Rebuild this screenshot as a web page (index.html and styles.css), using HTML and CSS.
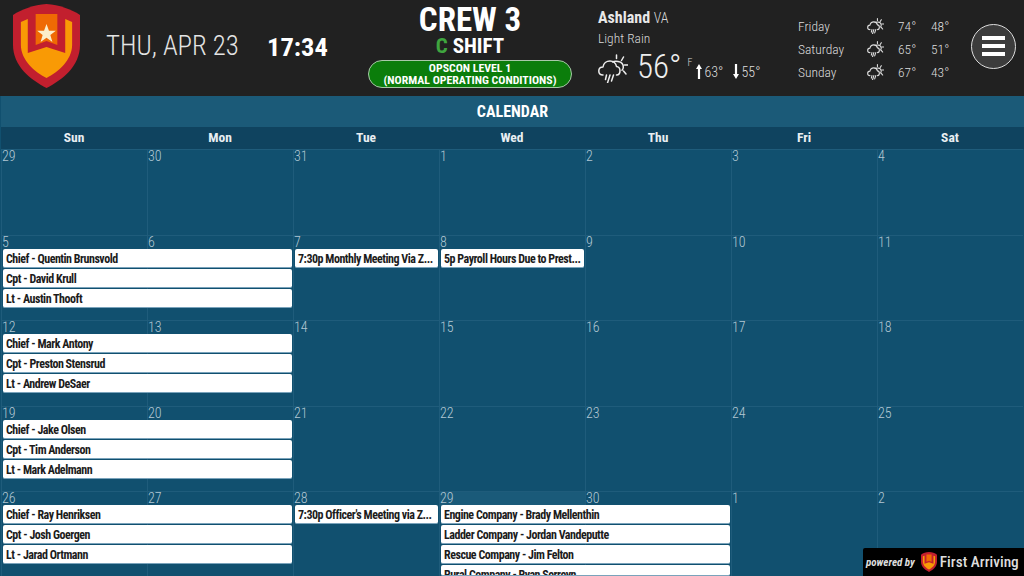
FILE: index.html
```html
<!DOCTYPE html>
<html>
<head>
<meta charset="utf-8">
<title>Station Board</title>
<link rel="stylesheet" href="styles.css">
</head>
<body>
<svg class="defs" width="0" height="0">
  <symbol id="rain" viewBox="0 0 30 29">
    <g fill="none" stroke="currentColor" stroke-linecap="round" stroke-linejoin="round">
      <path d="M5 21C2 21 .8 19 .8 17C.8 14.500 2.500 13 5 13C5.500 9.500 8.500 7 12 7C15.500 7 18 9.500 18.500 12.500C20.500 12.500 22 14.500 22 16.800C22 19.200 20.500 21 18.500 21"/>
      <path d="M14.500 8C15.500 7.500 18 7.200 20 7.500C23.500 8 25.500 10.500 25.300 13.500C25.200 14.500 24.800 15.500 24 16.300"/>
      <path d="M8.500 21L7.500 25.500M12 21L9.500 29M15.500 21L13.500 27"/>
      <path d="M18.500 1V4.500M25.500 3L23.500 6.500M26.500 11H30M25.500 17L28 20"/>
    </g>
  </symbol>
</svg>

<header class="top">
  <svg class="logo" viewBox="0 0 68 84" preserveAspectRatio="none">
    <path d="M34 0C47 1 59 5 68 11V41C68 62 50 76 34 84C18 76 0 62 0 41V11C9 5 21 1 34 0Z" fill="#c21f2e"/>
    <path d="M8 18L15 15V49L34 43L53 49V15L60 18V41C60 56 46 68 34 74C22 68 8 56 8 41Z" fill="#f99a05"/>
    <path d="M23 10H45V41L34 37L23 41Z" fill="#ef6a04"/>
    <path d="M34 20L36.500 26.800L43.500 26.800L37.900 31L40 38L34 33.800L28 38L30.100 31L24.500 26.800L31.500 26.800Z" fill="#fbeecb"/>
  </svg>
  <div class="date">THU, APR 23</div>
  <div class="clock">17:34</div>
  <div class="crew">
    <div class="crew-name">CREW 3</div>
    <div class="crew-shift"><span class="shift-letter">C</span> SHIFT</div>
    <div class="opscon">OPSCON LEVEL 1<br>(NORMAL OPERATING CONDITIONS)</div>
  </div>
  <div class="weather">
    <div class="city"><b>Ashland</b> <span class="state">VA</span></div>
    <div class="cond">Light Rain</div>
    <div class="now">
      <svg class="now-icon"><use href="#rain"/></svg>
      <span class="now-temp">56°</span>
      <span class="unit">F</span>
      <span class="hilo">
        <svg class="arrow" viewBox="0 0 6 15"><path d="M3 0L6 5H4.100V15H1.900V5H0Z" fill="#fff"/></svg>63°
        <svg class="arrow arrow-down" viewBox="0 0 6 15"><path d="M3 0L6 5H4.100V15H1.900V5H0Z" fill="#fff"/></svg>55°
      </span>
    </div>
  </div>
  <div class="forecast">
    <span>Friday</span><svg class="fc-icon"><use href="#rain"/></svg><span>74°</span><span>48°</span>
    <span>Saturday</span><svg class="fc-icon"><use href="#rain"/></svg><span>65°</span><span>51°</span>
    <span>Sunday</span><svg class="fc-icon"><use href="#rain"/></svg><span>67°</span><span>43°</span>
  </div>
  <div class="menu-btn"><i></i><i></i><i></i></div>
</header>

<main class="cal">
  <div class="cal-title">CALENDAR</div>
  <div class="cal-head">
    <div>Sun</div><div>Mon</div><div>Tue</div><div>Wed</div><div>Thu</div><div>Fri</div><div>Sat</div>
  </div>

  <div class="week">
    <div class="day d1">29</div><div class="day d2">30</div><div class="day d3">31</div><div class="day d4">1</div><div class="day d5">2</div><div class="day d6">3</div><div class="day d7">4</div>
  </div>

  <div class="week">
    <div class="day d1">5</div><div class="day d2">6</div><div class="day d3">7</div><div class="day d4">8</div><div class="day d5">9</div><div class="day d6">10</div><div class="day d7">11</div>
    <div class="ev r1 c1 s2">Chief - Quentin Brunsvold</div>
    <div class="ev r2 c1 s2">Cpt - David Krull</div>
    <div class="ev r3 c1 s2">Lt - Austin Thooft</div>
    <div class="ev r1 c3">7:30p Monthly Meeting Via Z...</div>
    <div class="ev r1 c4">5p Payroll Hours Due to Prest...</div>
  </div>

  <div class="week">
    <div class="day d1">12</div><div class="day d2">13</div><div class="day d3">14</div><div class="day d4">15</div><div class="day d5">16</div><div class="day d6">17</div><div class="day d7">18</div>
    <div class="ev r1 c1 s2">Chief - Mark Antony</div>
    <div class="ev r2 c1 s2">Cpt - Preston Stensrud</div>
    <div class="ev r3 c1 s2">Lt - Andrew DeSaer</div>
  </div>

  <div class="week">
    <div class="day d1">19</div><div class="day d2">20</div><div class="day d3">21</div><div class="day d4">22</div><div class="day d5">23</div><div class="day d6">24</div><div class="day d7">25</div>
    <div class="ev r1 c1 s2">Chief - Jake Olsen</div>
    <div class="ev r2 c1 s2">Cpt - Tim Anderson</div>
    <div class="ev r3 c1 s2">Lt - Mark Adelmann</div>
  </div>

  <div class="week">
    <div class="day d1">26</div><div class="day d2">27</div><div class="day d3">28</div><div class="day d4 today">29</div><div class="day d5">30</div><div class="day d6">1</div><div class="day d7">2</div>
    <div class="ev r1 c1 s2">Chief - Ray Henriksen</div>
    <div class="ev r2 c1 s2">Cpt - Josh Goergen</div>
    <div class="ev r3 c1 s2">Lt - Jarad Ortmann</div>
    <div class="ev r1 c3">7:30p Officer's Meeting via Z...</div>
    <div class="ev r1 c4 s2">Engine Company - Brady Mellenthin</div>
    <div class="ev r2 c4 s2">Ladder Company - Jordan Vandeputte</div>
    <div class="ev r3 c4 s2">Rescue Company - Jim Felton</div>
    <div class="ev r4 c4 s2">Rural Company - Ryan Serreyn</div>
  </div>
</main>

<div class="powered">
  <span class="pw-text">powered by</span>
  <svg class="pw-logo" viewBox="0 0 68 84">
    <path d="M34 0C47 1 59 5 68 11V41C68 62 50 76 34 84C18 76 0 62 0 41V11C9 5 21 1 34 0Z" fill="#c21f2e"/>
    <path d="M8 18L15 15V49L34 43L53 49V15L60 18V41C60 56 46 68 34 74C22 68 8 56 8 41Z" fill="#f99a05"/>
    <path d="M23 10H45V41L34 37L23 41Z" fill="#ef6a04"/>
  </svg>
  <span class="pw-name">First Arriving</span>
</div>
</body>
</html>
```

FILE: styles.css
```css
* { margin: 0; padding: 0; box-sizing: border-box; }
html, body { height: 576px; overflow: hidden; }
body { position: relative; background: #11506f; font-family: Roboto, "Liberation Sans", sans-serif; font-stretch: 75%; color: #fff; }
.defs { display: block; height: 0; }

/* top bar */
.top { display: flex; align-items: center; height: 96px; padding-left: 13px; background: #212121; }
.logo { width: 67px; height: 84px; flex: none; margin-top: -4px; }
.date { width: 161px; margin: -4px 0 0 26px; font-size: 26.800px; font-weight: 300; color: #e4e4e4; white-space: nowrap; }
.clock { width: 101px; margin-top: -3px; font-size: 26.500px; font-weight: 700; white-space: nowrap; }
.crew { align-self: flex-start; width: 204px; padding-top: 4px; text-align: center; }
.crew-name { font-size: 33px; line-height: 31px; font-weight: 700; }
.crew-shift { font-size: 21px; line-height: 22px; font-weight: 700; }
.shift-letter { color: #3fa53f; }
.opscon { height: 28px; margin-top: 3px; padding-top: 1px; background: #0b7d0b; border: 1px solid #a8c8a8; border-radius: 14px; font-size: 11.800px; line-height: 12px; font-weight: 700; }

.weather { width: 200px; margin-left: 26px; color: #d8d8d8; }
.city { font-size: 16px; line-height: 20px; }
.city b { color: #e8e8e8; }
.state { font-size: 14px; font-weight: 300; }
.cond { font-size: 13.500px; line-height: 20px; font-weight: 300; }
.now { display: flex; align-items: center; height: 40px; }
.now-icon { width: 30px; height: 29px; color: #eee; stroke-width: 1.500; }
.now-temp { margin: 0 0 3px 9px; font-size: 33px; font-weight: 300; color: #eee; }
.unit { align-self: flex-start; margin: 9px 0 0 6px; font-size: 10px; font-weight: 300; }
.hilo { margin: 8px 0 0 3px; font-size: 14px; font-weight: 300; color: #ddd; white-space: nowrap; }
.arrow { width: 6px; height: 15px; vertical-align: -2px; margin-right: 3px; }
.arrow-down { transform: rotate(180deg); margin-left: 6px; }

.forecast { display: grid; grid-template-columns: 69px 31px 33px 30px; grid-auto-rows: 23px; align-items: center; width: 173px; margin-top: 2px; font-size: 13.500px; font-weight: 300; color: #ddd; }
.fc-icon { width: 17px; height: 16px; color: #ddd; stroke-width: 2; }

.menu-btn { display: flex; flex-direction: column; justify-content: center; gap: 4px; width: 45px; height: 45px; margin-top: -4px; padding: 0 10px; border: 1px solid #ddd; border-radius: 50%; background: #3c3c3c; flex: none; }
.menu-btn i { display: block; height: 4px; background: #fff; }

/* calendar */
.cal { padding-left: 1px; background: #11506f; }
.cal-title { height: 31px; background: #1b5a78; text-align: center; font-size: 16px; line-height: 31px; font-weight: 700; }
.cal-head { display: grid; grid-template-columns: repeat(7, 146px); height: 22px; background: #0f435f; text-align: center; font-size: 13.500px; line-height: 21px; font-weight: 700; color: #e8eef2; }

.week { display: grid; grid-template-columns: repeat(7, 146px); grid-template-rows: 14px 20px 20px 20px 12px; height: 85.500px; }
.day { grid-row: 1 / span 5; border-left: 1px solid #1f5c7b; border-top: 1px solid #1f5c7b; font-size: 14px; line-height: 13px; font-weight: 300; color: #b3c8d4; }
.d1 { grid-column: 1; } .d2 { grid-column: 2; } .d3 { grid-column: 3; } .d4 { grid-column: 4; }
.d5 { grid-column: 5; } .d6 { grid-column: 6; } .d7 { grid-column: 7; }
.today { background: linear-gradient(#1a5a79 14px, transparent 14px); }

.ev { margin: 0 1px 1px 2px; padding: 1px 3px 0; background: #fff; border-bottom: 1px solid #7aa3bb; border-radius: 2px; color: #1c1c1c; font-size: 12px; line-height: 18px; font-weight: 700; letter-spacing: -.48px; white-space: nowrap; overflow: hidden; }
.r1 { grid-row: 2; } .r2 { grid-row: 3; } .r3 { grid-row: 4; } .r4 { grid-row: 5 / span 2; }
.c1 { grid-column: 1; } .c3 { grid-column: 3; } .c4 { grid-column: 4; }
.c1.s2 { grid-column: 1 / span 2; } .c4.s2 { grid-column: 4 / span 2; }

/* badge over the calendar */
.powered { position: absolute; right: 0; bottom: 0; display: flex; align-items: center; width: 161px; height: 28px; padding-left: 3px; background: #000; border-radius: 2px 0 0 0; }
.pw-text { font-size: 11px; font-weight: 700; font-style: italic; color: #ddd; white-space: nowrap; }
.pw-logo { width: 16px; height: 20px; margin: 0 3px 0 6px; flex: none; }
.pw-name { font-size: 15.300px; font-weight: 500; color: #ddd; white-space: nowrap; }
```
